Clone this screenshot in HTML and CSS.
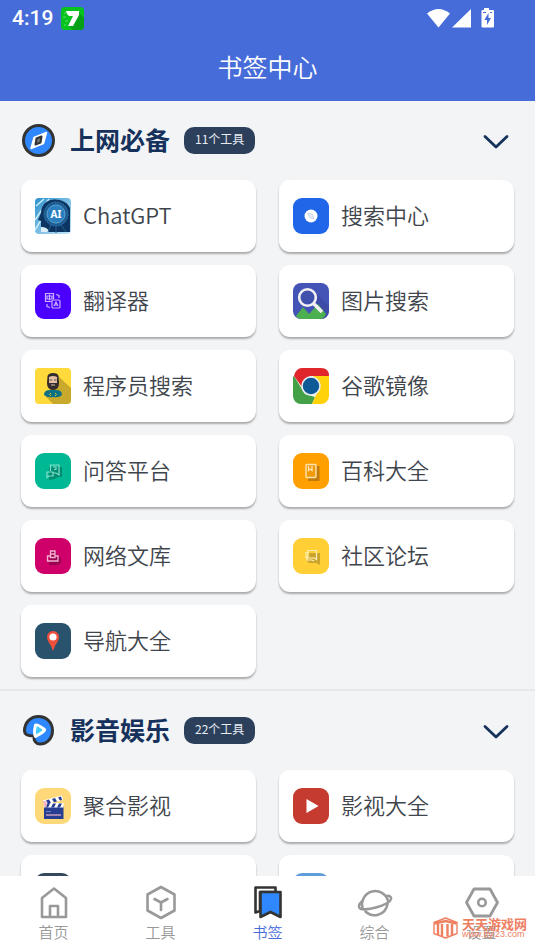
FILE: index.html
```html
<!DOCTYPE html>
<html lang="zh-CN">
<head>
    <meta charset="UTF-8">
    <meta name="viewport" content="width=device-width, initial-scale=1.0">
    <title>书签中心</title>
    <link rel="stylesheet" href="styles.css">
</head>
<body>
    <div class="app">
        <header class="header">
            <div class="status-bar">
                <span class="clock">4:19</span>
                <svg class="status-app" width="23" height="23" viewBox="0 0 23 23">
                    <rect width="23" height="23" rx="4" fill="#06c31d"/>
                    <path d="M16 4l7 7v8a4 4 0 0 1-4 4h-7l-5-5z" fill="#05a018"/>
                    <path d="M3 6h2M2 10h3M4 14h3M3 18h2" stroke="#5fdc6c" stroke-width="1"/>
                    <path d="M5 4h13v4l-6 11H7l5-10H8L6 7z" fill="#fff"/>
                </svg>
                <svg class="status-signal" width="67" height="21" viewBox="0 0 67 21">
                    <path d="M0 5.500Q11.500-3.500 23 5.500L11.500 19.500z" fill="#fff"/>
                    <path d="M44 1v18.500H25z" fill="#fff"/>
                    <path d="M57 0h5v2h4q1 0 1 1v15.500q0 1-1 1H55.500q-1 0-1-1V3q0-1 1-1H57z" fill="#fff"/>
                    <path d="M61.500 5l-4.200 7h2.700v5l4-7h-2.500z" fill="#466cd9"/>
                    <path d="M56 4.500h3M63 4.500h2" stroke="#466cd9" stroke-width="1"/>
                </svg>
            </div>
            <h1 class="page-title">书签中心</h1>
        </header>

        <main class="content">
            <section class="category">
                <div class="category-head">
                    <svg class="category-icon" width="35" height="35" viewBox="0 0 35 35">
                        <circle cx="17.500" cy="17.500" r="15" fill="#2f88ff" stroke="#333" stroke-width="3"/>
                        <path d="M25.500 9.500L22.500 20.500 10 25.500 13 14.500z" fill="#fff" stroke="#fff" stroke-width="1.500" stroke-linejoin="round"/>
                        <path d="M15.500 15.500l5-2-1 6-5 2z" fill="#777" stroke="#333" stroke-width="2" stroke-linejoin="round"/>
                    </svg>
                    <h2 class="category-title">上网必备</h2>
                    <span class="badge">11个工具</span>
                    <button class="toggle" type="button" aria-label="收起上网必备">
                        <svg width="26" height="16" viewBox="0 0 26 16"><path d="M2 3.500l11 10.500L24 3.500" fill="none" stroke="#16325c" stroke-width="2.800" stroke-linecap="round" stroke-linejoin="round"/></svg>
                    </button>
                </div>
                <div class="card-grid">
                    <a class="card" href="#chatgpt">
                        <svg class="card-icon" viewBox="0 0 36 36">
                            <defs>
                                <linearGradient id="sky" x1="0" y1="0" x2="1" y2="1">
                                    <stop offset="0" stop-color="#2d91cc"/>
                                    <stop offset="1" stop-color="#c5e8fa"/>
                                </linearGradient>
                            </defs>
                            <rect width="36" height="36" rx="4" fill="url(#sky)"/>
                            <path d="M0 22L14 1M0 32L9 17M1 8L9 1" stroke="#c9ecfb" stroke-width="1.500"/>
                            <path d="M11 34h24V10C31 1 17-1 10 5Q6 9 6 15l-3 7 3 1v5q0 2 5 2z" fill="#0c3562"/>
                            <path d="M6 29q7 0 8 5H6z" fill="#dceef8"/>
                            <circle cx="21" cy="16" r="12" fill="#1e5c92" stroke="#2f78aa" stroke-width="1" stroke-dasharray="2 1"/>
                            <circle cx="21" cy="16" r="9" fill="#2b7fbf" stroke="#5aa5d2" stroke-width="1"/>
                            <path d="M21 28v7M16 27l-3 7M26 27l5 7" stroke="#245f92" stroke-width="1"/>
                            <text class="ai-text" x="21" y="20" text-anchor="middle">AI</text>
                        </svg>
                        <span class="card-name">ChatGPT</span>
                    </a>
                    <a class="card" href="#search">
                        <svg class="card-icon" viewBox="0 0 36 36">
                            <rect width="36" height="36" rx="9" fill="#2165e8"/>
                            <circle cx="18" cy="18" r="6.500" fill="#fff"/>
                            <path d="M15 15l4.500 1.500 1.500 4.500-4.500-1.500z" fill="#e8eef8" stroke="#c9d4e6" stroke-width="1"/>
                        </svg>
                        <span class="card-name">搜索中心</span>
                    </a>
                    <a class="card" href="#translate">
                        <svg class="card-icon" viewBox="0 0 36 36">
                            <rect width="36" height="36" rx="9" fill="#4b00ff"/>
                            <g fill="none" stroke="#c8b0ff" stroke-width="1.200">
                                <path d="M16.500 18.500h-6v-8h8v6"/>
                                <rect x="17" y="17" width="8" height="8" rx="1"/>
                                <path d="M12 13h5v3h-5zM14.500 11.500v6M19 23l2-4 2 4M20 22h2M21 11.500l3 1v2.500M12 21v2.500l3 1"/>
                            </g>
                        </svg>
                        <span class="card-name">翻译器</span>
                    </a>
                    <a class="card" href="#image-search">
                        <svg class="card-icon" viewBox="0 0 36 36">
                            <rect width="36" height="36" rx="8" fill="#4453b6"/>
                            <path d="M21 8l15 15v5a8 8 0 0 1-8 8h-8z" fill="#3b489f" opacity=".6"/>
                            <path d="M3 33l7-9 6 7 9-10 8 10q-2 5-6 5H9q-4 0-6-3z" fill="#4caf50"/>
                            <path d="M20 20l9 9" stroke="#f3f0f3" stroke-width="3.500"/>
                            <circle cx="14.500" cy="14.500" r="8.300" fill="#4050ad" stroke="#f3f0f3" stroke-width="2.600"/>
                        </svg>
                        <span class="card-name">图片搜索</span>
                    </a>
                    <a class="card" href="#code-search">
                        <svg class="card-icon" viewBox="0 0 36 36">
                            <rect width="36" height="36" rx="4" fill="#ffda3a"/>
                            <path d="M23 8l13 12v12a4 4 0 0 1-4 4H18l-7-7z" fill="#c9a92c"/>
                            <path d="M9 27q0-5 6-5h6q6 0 6 5-3 3-9 2-6 1-9-2z" fill="#0d7184"/>
                            <path d="M12.500 8q1-3 5.500-3 5 0 5.500 3l.500 7q0 7-6 7t-6-7z" fill="#332d2d"/>
                            <path d="M14 9q4-2 8 0v6h-8z" fill="#e3bfa6"/>
                            <path d="M14.500 12h2.500M19 12h2.500" stroke="#554" stroke-width="1"/>
                            <path d="M16 17h4" stroke="#d9c5b7" stroke-width="1"/>
                            <path d="M16 25l-1.500 1.500L16 28M20 25l1.500 1.500L20 28" fill="none" stroke="#e2c62e" stroke-width="1"/>
                        </svg>
                        <span class="card-name">程序员搜索</span>
                    </a>
                    <a class="card" href="#google">
                        <svg class="card-icon" viewBox="0 0 36 36">
                            <path d="M1 8L12 26l10 3-3 7H8a8 8 0 0 1-8-8V9z" fill="#43a047"/>
                            <path d="M20 8h16v20a8 8 0 0 1-8 8h-9l7-16z" fill="#ffd20a"/>
                            <path d="M1 8Q3 0 9 0h19q8 0 8 8H18q-8 1-9 11z" fill="#e0262a"/>
                            <circle cx="18" cy="18" r="9" fill="#0e5a96" stroke="#e6ecef" stroke-width="1.600"/>
                        </svg>
                        <span class="card-name">谷歌镜像</span>
                    </a>
                    <a class="card" href="#qa">
                        <svg class="card-icon" viewBox="0 0 36 36">
                            <rect width="36" height="36" rx="9" fill="#00b894"/>
                            <path d="M14 14h13v10h-4l-4 2-5 1z" fill="#008c71"/>
                            <g fill="none" stroke="#83dfca" stroke-width="1.200">
                                <path d="M15.500 18v-6h8.500v10l-3-2h-3"/>
                                <path d="M12 19h6v4h-4l-2 1.500zM18 14h3v2.500h-2"/>
                            </g>
                        </svg>
                        <span class="card-name">问答平台</span>
                    </a>
                    <a class="card" href="#wiki">
                        <svg class="card-icon" viewBox="0 0 36 36">
                            <rect width="36" height="36" rx="9" fill="#ffa000"/>
                            <path d="M15 13h11.500v15H15z" fill="#c27b08"/>
                            <rect x="13" y="11.500" width="10" height="13" rx="1" fill="#f09a0c" stroke="#ffe3ad" stroke-width="1.400"/>
                            <path d="M15.500 13v4.500l1.500-1.500 2 1.500V13" fill="none" stroke="#ffe3ad" stroke-width="1.300"/>
                        </svg>
                        <span class="card-name">百科大全</span>
                    </a>
                    <a class="card" href="#library">
                        <svg class="card-icon" viewBox="0 0 36 36">
                            <rect width="36" height="36" rx="9" fill="#d0006b"/>
                            <path d="M15 14h6l1 5h4v6l-3 2h-9z" fill="#980451"/>
                            <path d="M15.500 19.500V13h4.500v6.500zM15.500 18h-3v5h10.500v-5h-3M15.500 16h4.500" fill="none" stroke="#f3b1d2" stroke-width="1.300"/>
                        </svg>
                        <span class="card-name">网络文库</span>
                    </a>
                    <a class="card" href="#forum">
                        <svg class="card-icon" viewBox="0 0 36 36">
                            <rect width="36" height="36" rx="9" fill="#ffcf35"/>
                            <path d="M16 15h11v12l-4-2h-7l-2-2z" fill="#cba42d"/>
                            <g fill="none" stroke="#fff0b6" stroke-width="1.200">
                                <path d="M15 19.500h-2v-5h2v-2h8.500v9l-2-1.500h-6.500v-5"/>
                                <path d="M14 19v3h5l2 1"/>
                            </g>
                        </svg>
                        <span class="card-name">社区论坛</span>
                    </a>
                    <a class="card" href="#navigation">
                        <svg class="card-icon" viewBox="0 0 36 36">
                            <rect width="36" height="36" rx="9" fill="#29536c"/>
                            <path d="M18 28q-1.500-5-4-8.500Q12 17 12 14a6 6 0 0 1 12 0q0 3-2 5.500-2.500 3.500-4 8.500z" fill="#f04f3c"/>
                            <circle cx="18" cy="14" r="3.600" fill="#fff"/>
                        </svg>
                        <span class="card-name">导航大全</span>
                    </a>
                </div>
            </section>

            <section class="category">
                <div class="category-head">
                    <svg class="category-icon" width="35" height="35" viewBox="0 0 35 35">
                        <path d="M3.500 18C3.500 9 10 3.500 17.500 3.500c8 0 14 6 14 14s-5.500 13.500-12.500 13.500c-4 0-6.500-3-6-8-5 0-9.500-1.500-9.500-5z" fill="#2f88ff" stroke="#333" stroke-width="3" stroke-linejoin="round"/>
                        <path d="M14.500 12q2-1 9 4.500 1 1.500-9 7-2-3 0-11.500z" fill="#43ccf8" stroke="#fff" stroke-width="3" stroke-linejoin="round"/>
                    </svg>
                    <h2 class="category-title">影音娱乐</h2>
                    <span class="badge">22个工具</span>
                    <button class="toggle" type="button" aria-label="收起影音娱乐">
                        <svg width="26" height="16" viewBox="0 0 26 16"><path d="M2 3.500l11 10.500L24 3.500" fill="none" stroke="#16325c" stroke-width="2.800" stroke-linecap="round" stroke-linejoin="round"/></svg>
                    </button>
                </div>
                <div class="card-grid">
                    <a class="card" href="#video">
                        <svg class="card-icon" viewBox="0 0 36 36">
                            <rect width="36" height="36" rx="9" fill="#ffd979"/>
                            <rect x="9" y="18" width="19.500" height="13" fill="#263e91"/>
                            <path d="M9 15h19.500v4.500H9zM8 12.500l19-5 .800 4.500L9 17z" fill="#fff"/>
                            <path d="M11 12.500l3-1 2 3.500-3 .800zM17 11l3-1 2 3.500-3 .800zM23 9.500l3-1 1 3.500-2 .600zM12 15.500h3l-2 4h-3zM18 15.500h3l-2 4h-3zM24 15.500h3l-2 4h-3z" fill="#263e91"/>
                            <path d="M8 13.500l3-1 1 6H9z" fill="#f4b5c2"/>
                            <path d="M11 23.500h5" stroke="#6e80bd" stroke-width="1"/>
                            <path d="M11 27h15" stroke="#f3b4c5" stroke-width="1.200"/>
                        </svg>
                        <span class="card-name">聚合影视</span>
                    </a>
                    <a class="card" href="#movies">
                        <svg class="card-icon" viewBox="0 0 36 36">
                            <rect width="36" height="36" rx="9" fill="#c53b2f"/>
                            <path d="M13.500 11l12 7-12 7z" fill="#fff"/>
                        </svg>
                        <span class="card-name">影视大全</span>
                    </a>
                    <a class="card" href="#more-left" aria-label="更多影音">
                        <svg class="card-icon" viewBox="0 0 36 36"><rect width="36" height="36" rx="9" fill="#34495e"/></svg>
                    </a>
                    <a class="card" href="#more-right" aria-label="更多娱乐">
                        <svg class="card-icon" viewBox="0 0 36 36"><rect width="36" height="36" rx="9" fill="#5f9dda"/></svg>
                    </a>
                </div>
            </section>
        </main>

        <nav class="tab-bar">
            <a class="tab" href="#home">
                <svg class="tab-icon" viewBox="0 0 36 36">
                    <path d="M6 33V14L18 4.500 30 14v19zM14 33V22h8v11" fill="none" stroke="#999" stroke-width="2.600" stroke-linejoin="round"/>
                </svg>
                <span>首页</span>
            </a>
            <a class="tab" href="#tools">
                <svg class="tab-icon" viewBox="0 0 36 36">
                    <path d="M18 3l13.500 7.500v16L18 34 4.500 26.500v-16zM11.500 15L18 18.500l6.500-3.500M18 18.500v7.500" fill="none" stroke="#999" stroke-width="2.600" stroke-linejoin="round" stroke-linecap="round"/>
                </svg>
                <span>工具</span>
            </a>
            <a class="tab active" href="#bookmarks">
                <svg class="tab-icon" viewBox="0 0 36 36">
                    <path d="M5.500 28.500v-25h20V8H10v19z" fill="#fff" stroke="#333" stroke-width="2.600" stroke-linejoin="round"/>
                    <path d="M10.500 8h20v25L20.500 28l-10 5z" fill="#2f88ff" stroke="#333" stroke-width="2.600" stroke-linejoin="round"/>
                </svg>
                <span>书签</span>
            </a>
            <a class="tab" href="#misc">
                <svg class="tab-icon" viewBox="0 0 36 36">
                    <g fill="none" stroke="#999" stroke-width="2.500" stroke-linecap="round">
                        <path d="M5.500 23.500A13 13 0 1 1 31 17M8.500 27.500C15 34 28.500 32 30.500 20"/>
                        <path d="M5.500 17C1.500 20 1.500 22 2.500 24c3 4 30-2.500 31.500-9 .500-2.500-2-3.500-4.500-3"/>
                    </g>
                </svg>
                <span>综合</span>
            </a>
            <a class="tab" href="#settings">
                <svg class="tab-icon" viewBox="0 0 36 36">
                    <path d="M10 5h16l7.500 13.500L26 32H10L2.500 18.500z" fill="none" stroke="#999" stroke-width="2.800" stroke-linejoin="round"/>
                    <circle cx="18" cy="18.500" r="3.800" fill="none" stroke="#999" stroke-width="2.600"/>
                </svg>
                <span>设置</span>
            </a>
        </nav>

        <div class="watermark">
            <svg width="25" height="22" viewBox="0 0 25 22">
                <path d="M1 5.500L12.500 1 24 5.500v11L12.500 21 1 16.500z" fill="none" stroke="#ee8062" stroke-width="1.400" stroke-linejoin="round"/>
                <path d="M1.500 6.500L12.500 4l11 2.500M5 7v11M9 7v12M14.500 7v12.500M19 7v11" fill="none" stroke="#ee8062" stroke-width="2.400"/>
            </svg>
            <div class="watermark-text">
                <strong>天天游戏网</strong>
                <small>www.ttyl23.com</small>
            </div>
        </div>
    </div>
</body>
</html>
```
FILE: styles.css
```css
* {
    box-sizing: border-box;
}
body {
    margin: 0;
    font-family: "Noto Sans CJK SC", sans-serif;
    background: #f3f4f6;
    color: #3f454c;
}
a {
    color: inherit;
    text-decoration: none;
}
.app {
    position: relative;
    display: flex;
    flex-direction: column;
    height: 100vh;
}

/* header */
.header {
    background: #466cd9;
    color: white;
    flex: none;
}
.status-bar {
    display: flex;
    align-items: center;
    height: 36px;
    padding: 0 41px 0 12px;
}
.clock {
    font-family: Roboto, sans-serif;
    font-size: 21px;
    font-weight: 500;
}
.status-app {
    margin-left: 8px;
}
.status-signal {
    margin-left: auto;
}
.page-title {
    margin: 0;
    padding-bottom: 5px;
    font-size: 25px;
    font-weight: 350;
    line-height: 60px;
    text-align: center;
}

/* bookmark list */
.content {
    flex: 1;
    min-height: 0;
    overflow-y: auto;
    scrollbar-width: none;
}
.category {
    padding: 0 21px 12px;
    border-bottom: 2px solid #e7e8ea;
}
.category-head {
    display: flex;
    align-items: center;
    height: 79px;
}
.category-title {
    margin: 0 14px;
    padding-bottom: 3px;
    font-size: 25px;
    font-weight: 700;
    line-height: 36px;
    color: #16325c;
}
.badge {
    padding: 0 11px 4px;
    border-radius: 10px;
    background: #2c405c;
    color: #e8ecf2;
    font-size: 12px;
    line-height: 23px;
}
.toggle {
    display: flex;
    margin-left: auto;
    padding: 5px;
    border: none;
    background: none;
    cursor: pointer;
}
.card-grid {
    display: grid;
    grid-template-columns: 1fr 1fr;
    gap: 13px 23px;
}
.card {
    display: flex;
    align-items: center;
    gap: 12px;
    height: 72px;
    padding: 0 14px;
    border-radius: 11px;
    background: white;
    box-shadow: 0 2px 2px rgba(0, 0, 0, 0.3);
    font-size: 22px;
    font-weight: 350;
}
.card-name {
    padding-bottom: 4px;
}
.card-icon {
    width: 36px;
    height: 36px;
    flex: none;
}
.ai-text {
    fill: white;
    font-family: "Noto Sans", sans-serif;
    font-size: 10px;
    font-weight: 700;
}

/* bottom tabs */
.tab-bar {
    display: flex;
    flex: none;
    height: 75px;
    background: white;
}
.tab {
    display: flex;
    flex: 1;
    flex-direction: column;
    align-items: center;
    padding-top: 8px;
    color: #999;
    font-size: 15px;
    font-weight: 350;
    line-height: 24px;
}
.tab.active {
    color: #466cd9;
}
.tab-icon {
    width: 36px;
    height: 36px;
}

.watermark {
    position: absolute;
    right: 8px;
    bottom: 12px;
    display: flex;
    align-items: center;
    gap: 4px;
    color: #ee8062;
    pointer-events: none;
}
.watermark-text {
    display: flex;
    flex-direction: column;
}
.watermark strong {
    font-size: 13px;
    line-height: 13px;
}
.watermark small {
    font-family: "Liberation Sans", sans-serif;
    font-size: 9px;
    line-height: 9px;
}
```
